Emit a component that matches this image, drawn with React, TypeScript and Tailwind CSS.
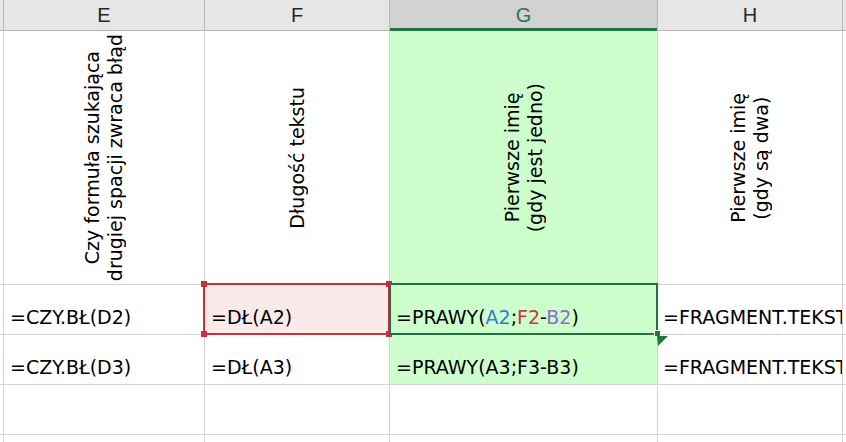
const font = "font-['DejaVu_Sans',sans-serif]";

function HeadCell({ label, w, selected }: { label: string; w: string; selected?: boolean }) {
  return (
    <div
      className={`${w} relative flex items-center justify-center border-r border-[#b9b9b9] ${
        selected ? "bg-[#d2d2d2] text-[#2c7151]" : "bg-[#e6e6e6] text-[#262626]"
      }`}
    >
      <span className="font-['Liberation_Sans',sans-serif] text-[20px] leading-none">{label}</span>
      {selected && <div className="absolute -bottom-px left-0 right-0 h-[3px] bg-[#217346]" />}
    </div>
  );
}

function Vertical({ lines }: { lines: string[] }) {
  return (
    <div className={`${font} rotate-180 text-center text-[19px] leading-[23px] text-black [writing-mode:vertical-rl]`}>
      {lines.map((l) => (
        <div key={l}>{l}</div>
      ))}
    </div>
  );
}

export default function App() {
  const grid = "border-r border-[#d4d4d4]";
  return (
    <div className="h-[442px] w-[846px] overflow-hidden bg-white">
      {/* naglowki kolumn */}
      <div className="flex h-[31px] border-b border-[#b5b5b5] bg-[#e6e6e6]">
        <div className="w-[4px] border-r border-[#b9b9b9]" />
        <HeadCell label="E" w="w-[201px]" />
        <HeadCell label="F" w="w-[185px]" />
        <HeadCell label="G" w="w-[268px]" selected />
        <HeadCell label="H" w="w-[185px]" />
        <div className="flex-1" />
      </div>

      {/* wiersz z opisami */}
      <div className="flex h-[254px] border-b border-[#d4d4d4]">
        <div className={`w-[4px] ${grid}`} />
        <div className={`flex w-[201px] items-center justify-center ${grid}`}>
          <Vertical lines={["Czy formuła szukająca", "drugiej spacji zwraca błąd"]} />
        </div>
        <div className={`flex w-[185px] items-center justify-center ${grid}`}>
          <Vertical lines={["Długość tekstu"]} />
        </div>
        <div className={`flex w-[268px] items-center justify-center bg-[#ccffcc] ${grid}`}>
          <Vertical lines={["Pierwsze imię", "(gdy jest jedno)"]} />
        </div>
        <div className={`flex w-[185px] items-center justify-center ${grid}`}>
          <Vertical lines={["Pierwsze imię", "(gdy są dwa)"]} />
        </div>
        <div className="flex-1" />
      </div>

      {/* wiersz 2 */}
      <div className={`${font} flex h-[50px] border-b border-[#d4d4d4] text-[19px] leading-none text-black`}>
        <div className={`w-[4px] ${grid}`} />
        <div className={`flex w-[201px] items-end pb-[7px] pl-[6px] ${grid}`}>=CZY.BŁ(D2)</div>
        <div className={`relative flex w-[185px] items-end bg-[#fbeaea] pb-[7px] pl-[6px] ${grid}`}>
          =DŁ(A2)
          <div className="absolute -left-[2px] -top-[2px] -right-[1px] -bottom-[1px] border-2 border-[#c4303b]" />
          <div className="absolute -left-[4px] -top-[4px] h-[6px] w-[6px] bg-[#c4303b]" />
          <div className="absolute -left-[4px] -bottom-[3px] h-[6px] w-[6px] bg-[#c4303b]" />
          <div className="absolute -right-[3px] -top-[4px] h-[6px] w-[6px] bg-[#c4303b]" />
          <div className="absolute -right-[3px] -bottom-[3px] h-[6px] w-[6px] bg-[#c4303b]" />
        </div>
        <div className={`relative flex w-[268px] items-end bg-[#ccffcc] pb-[7px] pl-[6px] ${grid}`}>
          <span>
            =PRAWY(<span className="text-[#3b78d0]">A2</span>;<span className="text-[#d8323c]">F2</span>-
            <span className="text-[#8d6cc4]">B2</span>)
          </span>
          <div className="absolute -left-[1px] -top-[2px] -right-[1px] -bottom-[1px] border-2 border-[#217346]" />
          <div className="absolute -right-[4px] -bottom-[3px] h-[7px] w-[7px] border border-white bg-[#217346]" />
          <svg className="absolute -right-[11px] -bottom-[12px]" width="11" height="10" viewBox="0 0 11 10">
            <polygon points="0,0 11,0 1,10" fill="#1f7a3c" />
          </svg>
        </div>
        <div className={`flex w-[185px] items-end overflow-hidden whitespace-nowrap pb-[7px] pl-[5px] ${grid}`}>
          =FRAGMENT.TEKST
        </div>
        <div className="flex-1 bg-white" />
      </div>

      {/* wiersz 3 */}
      <div className={`${font} flex h-[50px] border-b border-[#d4d4d4] text-[19px] leading-none text-black`}>
        <div className={`w-[4px] ${grid}`} />
        <div className={`flex w-[201px] items-end pb-[7px] pl-[6px] ${grid}`}>=CZY.BŁ(D3)</div>
        <div className={`flex w-[185px] items-end pb-[7px] pl-[6px] ${grid}`}>=DŁ(A3)</div>
        <div className={`flex w-[268px] items-end bg-[#ccffcc] pb-[7px] pl-[6px] ${grid}`}>=PRAWY(A3;F3-B3)</div>
        <div className={`flex w-[185px] items-end overflow-hidden whitespace-nowrap pb-[7px] pl-[5px] ${grid}`}>
          =FRAGMENT.TEKST
        </div>
        <div className="flex-1 bg-white" />
      </div>

      {/* wiersz 4 */}
      <div className="flex h-[50px] border-b border-[#d4d4d4]">
        <div className={`w-[4px] ${grid}`} />
        <div className={`w-[201px] ${grid}`} />
        <div className={`w-[185px] ${grid}`} />
        <div className={`w-[268px] ${grid}`} />
        <div className={`w-[185px] ${grid}`} />
        <div className="flex-1" />
      </div>
      <div className="flex h-[8px]">
        <div className={`w-[4px] ${grid}`} />
        <div className={`w-[201px] ${grid}`} />
        <div className={`w-[185px] ${grid}`} />
        <div className={`w-[268px] ${grid}`} />
        <div className={`w-[185px] ${grid}`} />
        <div className="flex-1" />
      </div>
    </div>
  );
}
